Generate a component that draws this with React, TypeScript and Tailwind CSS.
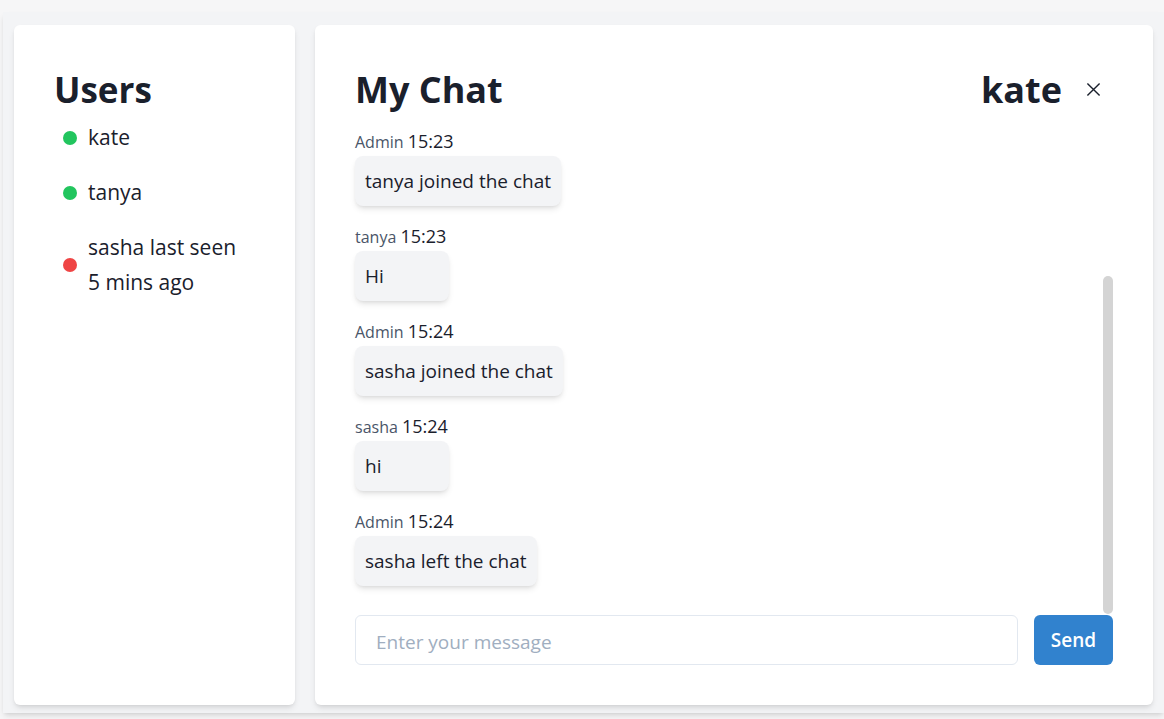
import React from 'react';

type User = { name: string; online: boolean; note?: string };
type Message = { from: string; time: string; text: string };

const users: User[] = [
  { name: 'kate', online: true },
  { name: 'tanya', online: true },
  { name: 'sasha', online: false, note: 'last seen 5 mins ago' },
];

const messages: Message[] = [
  { from: 'Admin', time: '15:23', text: 'tanya joined the chat' },
  { from: 'tanya', time: '15:23', text: 'Hi' },
  { from: 'Admin', time: '15:24', text: 'sasha joined the chat' },
  { from: 'sasha', time: '15:24', text: 'hi' },
  { from: 'Admin', time: '15:24', text: 'sasha left the chat' },
];

const CloseIcon: React.FC<{ className?: string }> = ({ className }) => (
  <svg viewBox="0 0 16 16" fill="none" stroke="currentColor" strokeWidth={1.5} className={className}>
    <path d="M1.5 1.5l13 13M14.5 1.5l-13 13" />
  </svg>
);

const UserList: React.FC = () => (
  <div className="w-[281px] shrink-0 rounded-md bg-white p-10 shadow-md">
    <h2 className="pt-[3px] text-[35px] font-bold leading-[43px] text-[#1a202c]">Users</h2>
    <ul className="mt-[9px] flex flex-col gap-5 pl-[9px]">
      {users.map((u) => (
        <li key={u.name} className="flex items-center gap-[11px]">
          <span
            className={
              u.online
                ? 'h-[14px] w-[14px] shrink-0 rounded-full bg-[#22c55e]'
                : 'h-[14px] w-[14px] shrink-0 rounded-full bg-[#ef4444]'
            }
          />
          <span className="w-[156px] text-[21px] leading-[35px] text-[#1a202c]">
            {u.name}
            {u.note ? ' ' + u.note : ''}
          </span>
        </li>
      ))}
    </ul>
  </div>
);

const ChatPanel: React.FC = () => (
  <div className="relative flex flex-1 flex-col rounded-md bg-white p-10 shadow-md">
    {/* header */}
    <div className="flex items-center justify-between pt-[3px]">
      <h1 className="text-[36px] font-bold leading-[43px] text-[#1a202c]">My Chat</h1>
      <div className="flex items-center">
        <span className="text-[36px] font-bold leading-[43px] text-[#1a202c]">kate</span>
        <button className="ml-[24px] mr-[12px] text-[#1a202c]" aria-label="Close">
          <CloseIcon className="h-[15px] w-[15px]" />
        </button>
      </div>
    </div>

    {/* messages */}
    <div className="mt-[17px] flex flex-col items-start gap-[17px]">
      {messages.map((m, i) => (
        <div key={i} className="flex flex-col items-start">
          <div className="leading-[27px]">
            <span className="text-[16px] text-[#4a5568]">{m.from}</span>{' '}
            <span className="text-[18px] text-[#1a202c]">{m.time}</span>
          </div>
          <div className="min-w-[94px] rounded-lg bg-[#f3f4f6] px-[10px] py-[11px] text-[19px] leading-[28px] text-[#1a202c] shadow-md">
            {m.text}
          </div>
        </div>
      ))}
    </div>

    {/* scroll thumb */}
    <div className="absolute right-[40px] top-[251px] h-[338px] w-[10px] rounded-full bg-[#d4d4d4]" />

    {/* input */}
    <div className="mt-auto flex gap-4">
      <input
        placeholder="Enter your message"
        className="h-[50px] flex-1 rounded-md border border-[#e2e8f0] px-5 pt-[3px] text-[19px] text-[#1a202c] outline-none placeholder:text-[#a0aec0]"
      />
      <button className="h-[50px] w-[79px] rounded-md bg-[#3182ce] text-[19px] font-semibold text-white">
        Send
      </button>
    </div>
  </div>
);

export default function App() {
  return (
    <div
      className="h-screen overflow-hidden bg-[#f6f6f7]"
      style={{ fontFamily: '"Open Sans", "Noto Sans", sans-serif' }}
    >
      <div className="ml-[3px] mt-[12px] flex h-[701px] gap-5 bg-[#f3f4f6] pb-[8px] pl-[11px] pr-[11px] pt-[13px] shadow-md">
        <UserList />
        <ChatPanel />
      </div>
    </div>
  );
}
